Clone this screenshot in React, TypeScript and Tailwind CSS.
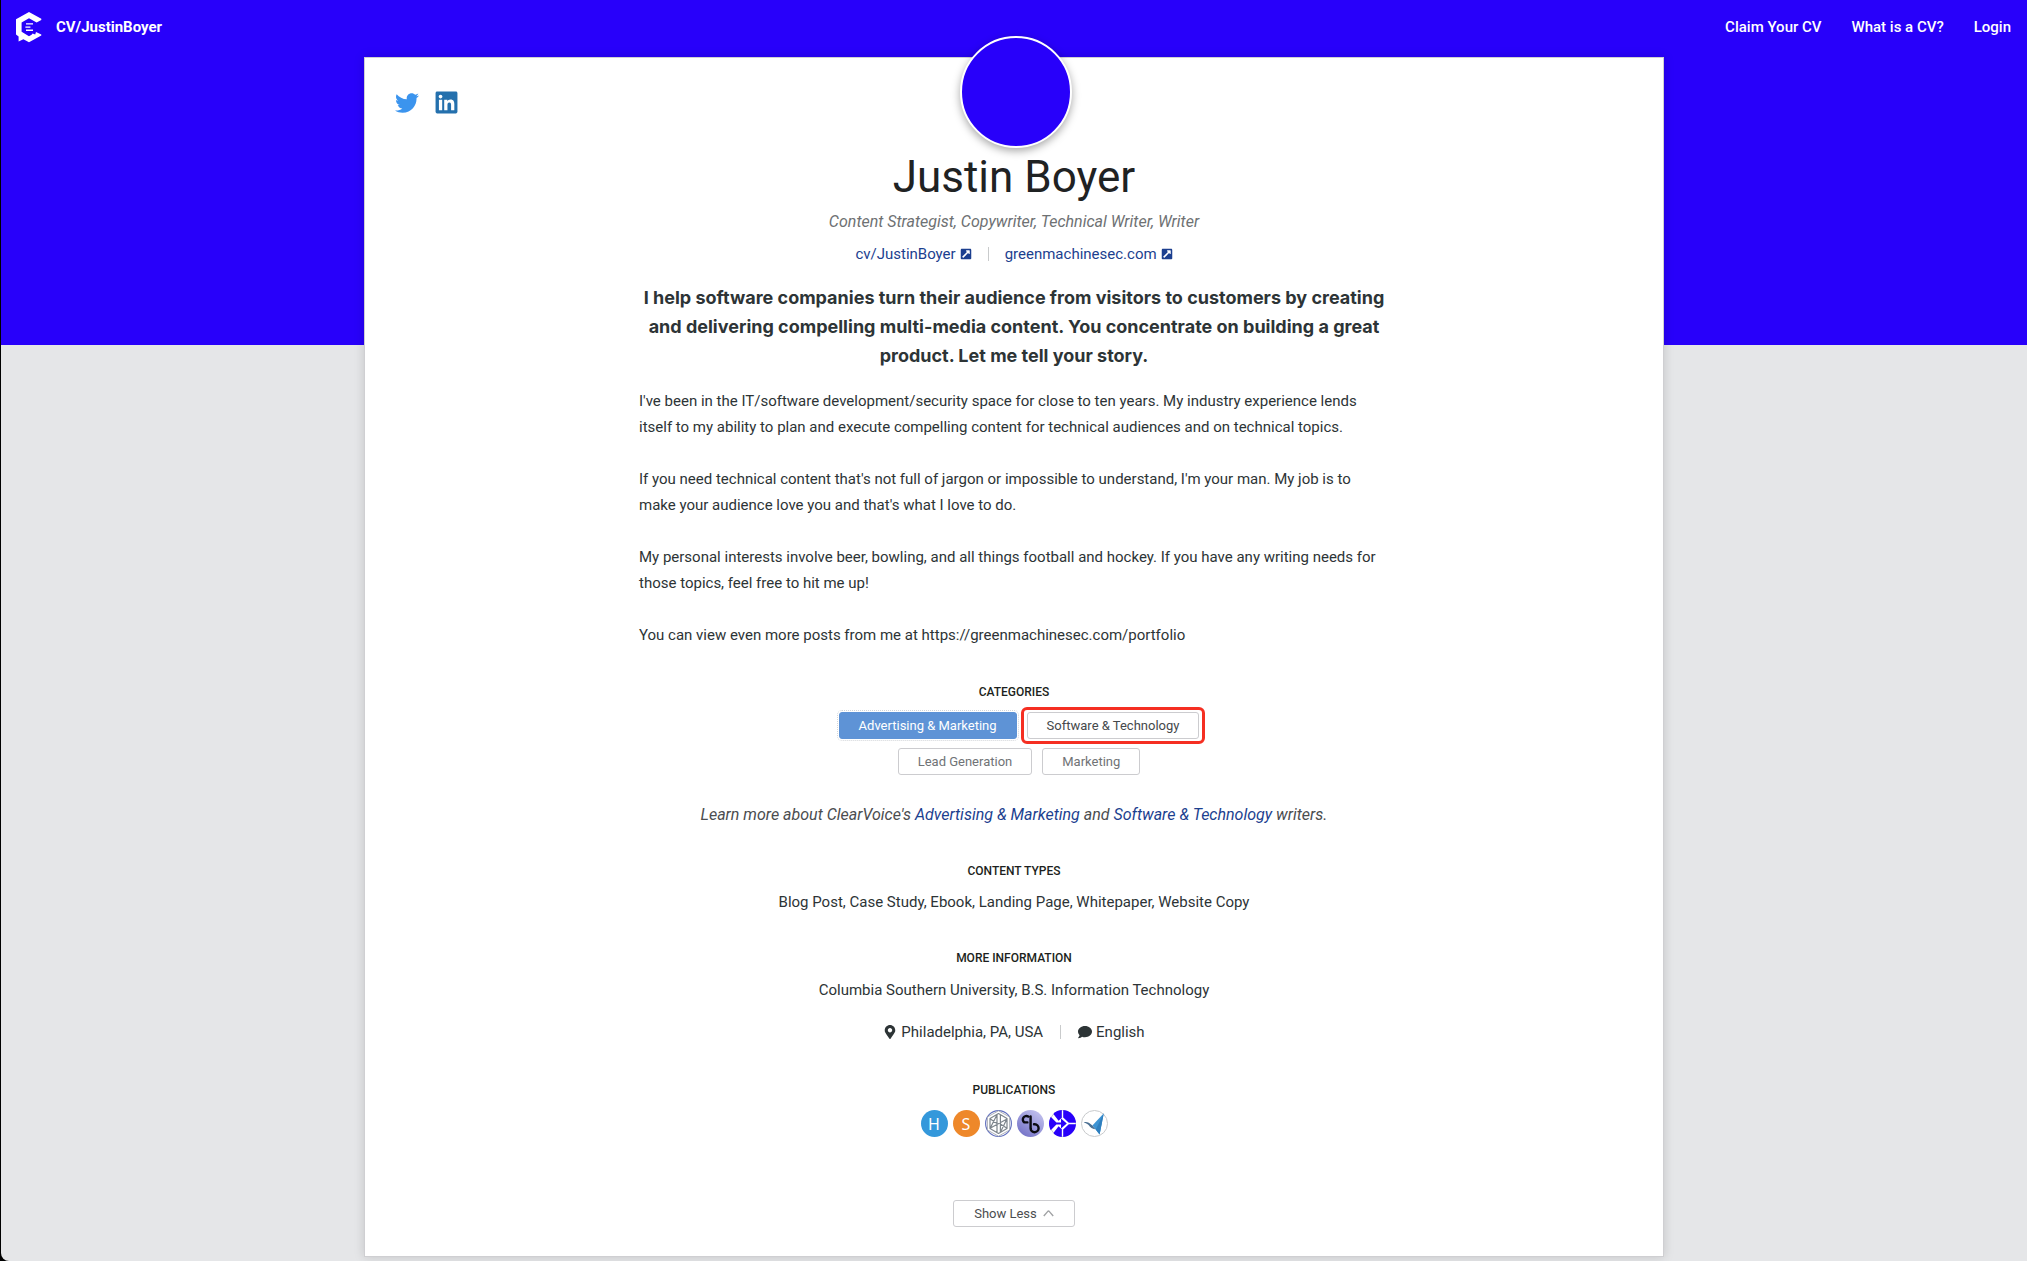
import type { ReactNode } from "react";
import { FaComment, FaExternalLinkSquareAlt, FaLinkedin, FaMapMarkerAlt, FaTwitter } from "react-icons/fa";

const paragraphs = [
  "I've been in the IT/software development/security space for close to ten years. My industry experience lends\nitself to my ability to plan and execute compelling content for technical audiences and on technical topics.",
  "If you need technical content that's not full of jargon or impossible to understand, I'm your man. My job is to\nmake your audience love you and that's what I love to do.",
  "My personal interests involve beer, bowling, and all things football and hockey. If you have any writing needs for\nthose topics, feel free to hit me up!",
  "You can view even more posts from me at https://greenmachinesec.com/portfolio",
];

function Logo() {
  return (
    <svg width="26" height="31" viewBox="0 0 26 31" aria-hidden="true">
      <path
        fill="#fff"
        d="M13 0 L25.3 6.8 V8 L20.6 10.6 L13 6.2 L5.6 10.4 V19.8 L13 24.2 L15.6 22.8 L16.6 21.6 L19.2 22.6 L20 20 L25.3 22.6 V23.6 L13 30.2 L7.4 27.2 L2.6 29.4 V24.4 L0 22.6 V7.2 Z"
      />
      <path fill="none" stroke="#fff" strokeWidth="1.4" d="M10 11.9h7M9.4 15.1h5M10 18.3h7" />
    </svg>
  );
}

function Heading({ children }: { children: ReactNode }) {
  return <h2 className="text-center text-xs leading-4 font-medium text-[#1c1f20] uppercase">{children}</h2>;
}

function Divider() {
  return <span className="h-3.5 w-px bg-[#c9cbcc]" />;
}

function Tag({ children, tone }: { children: ReactNode; tone: string }) {
  return (
    <button type="button" className={`h-[27px] rounded-[3px] border px-[19px] text-[13px] leading-4 ${tone}`}>
      {children}
    </button>
  );
}

function Letter({ children, tone }: { children: ReactNode; tone: string }) {
  return (
    <span className={`grid size-[27px] place-items-center rounded-full font-['Noto_Sans',sans-serif] text-base text-white ${tone}`}>
      {children}
    </span>
  );
}

function HexMesh() {
  return (
    <svg width="27" height="27" viewBox="0 0 27 27" aria-hidden="true">
      <circle cx="13.5" cy="13.5" r="12.9" fill="#fff" stroke="#6573c0" strokeWidth="1.2" />
      <path d="M13.5 0.8 L24.6 7 V20 L13.5 26.2 L2.4 20 V7 Z" fill="#fff" stroke="#9aa0a8" strokeWidth="0.8" />
      <path
        d="M13.5 3.6 L22 8.4 V18.6 L13.5 23.4 L5 18.6 V8.4 Z M12 4.5 V22.6 M15.4 4.8 V22.4 M5 8.8 L12 13.6 M5 18.4 L12 4.8 M5 18.2 L22 9 M15.4 14 L22 18.2 M15.4 22.2 L22 8.8"
        fill="none"
        stroke="#7d858c"
        strokeWidth="1.2"
        strokeLinejoin="round"
      />
    </svg>
  );
}

function LoopMark() {
  return (
    <svg width="27" height="27" viewBox="0 0 27 27" aria-hidden="true">
      <defs>
        <linearGradient id="loop" x1="0.1" y1="1" x2="0.8" y2="0">
          <stop offset="0" stopColor="#6e6cc4" />
          <stop offset="1" stopColor="#c3c2ee" />
        </linearGradient>
      </defs>
      <circle cx="13.5" cy="13.5" r="13.5" fill="url(#loop)" />
      <path
        d="M11.2 6.6 A3.3 3.3 0 1 0 7.4 12.4 H10.4 M13.6 6.4 V18.4 A4 4 0 1 0 17.8 14.2 H17"
        fill="none"
        stroke="#0b0b12"
        strokeWidth="2.4"
        strokeLinecap="round"
        strokeLinejoin="round"
      />
    </svg>
  );
}

function ArrowMark() {
  return (
    <svg width="27" height="27" viewBox="0 0 27 27" aria-hidden="true">
      <defs>
        <clipPath id="disc">
          <circle cx="13.5" cy="13.5" r="13.5" />
        </clipPath>
      </defs>
      <circle cx="13.5" cy="13.5" r="13" fill="#fff" stroke="#c9c9d6" />
      <g fill="#2800fa" clipPath="url(#disc)">
        <path d="M6 0 H12.8 V7.8 L9.6 10.8 L4.4 4 Z" />
        <path d="M14.2 0 H27 V12.8 H19.8 L14.2 7.4 Z" />
        <path d="M0 5 L7.4 12.6 H12 V8.4 L17.8 13.5 L12 18.6 V14.4 H7.4 L0 22 Z" />
        <path d="M6 27 H12.8 V19.2 L9.6 16.2 L4.4 23 Z" />
        <path d="M14.2 27 H27 V14.2 H19.8 L14.2 19.6 Z" />
      </g>
    </svg>
  );
}

function BirdMark() {
  return (
    <svg width="27" height="27" viewBox="0 0 27 27" aria-hidden="true">
      <circle cx="13.5" cy="13.5" r="13" fill="#fff" stroke="#c8cacc" />
      <path d="M22.8 3.2 L11.4 15.4 L18.6 24.4 Z" fill="#3d93d3" />
      <path d="M22.8 3.2 L14.8 19.4 L18.6 24.4 Z" fill="#2f7fbe" />
      <path d="M2.8 12.4 C5.2 11.4 8 12.4 11.4 15.4 L14.4 19.2 C10 19 8.6 15.6 6.6 14.2 C5.6 13.4 4.4 13 2.8 12.4 Z" fill="#4a6f92" />
    </svg>
  );
}

export default function App() {
  return (
    <div className="min-h-screen bg-black pl-px font-[Roboto,sans-serif] text-[15px] text-[#2d3436]">
      <div className="flow-root min-h-screen overflow-hidden rounded-bl-lg bg-[#e5e6e8] pb-1">
        <header className="h-[345px] bg-[#2800fa] text-white">
          <div className="flex h-[54px] items-center justify-between px-4 pl-[15px]">
            <a href="#cv" className="flex items-center gap-3.5 font-bold">
              <Logo />
              CV/JustinBoyer
            </a>
            <nav className="flex gap-[30px] font-medium">
              <a href="#claim">Claim Your CV</a>
              <a href="#about">What is a CV?</a>
              <a href="#login">Login</a>
            </nav>
          </div>
        </header>

        <main className="relative mx-auto -mt-[288px] flex max-w-[1300px] flex-col items-center border border-[#cfcfd2] bg-white pb-[29px] shadow-[0_0_10px_rgba(0,0,0,0.15)]">
          <div className="grid w-full grid-cols-[1fr_auto_1fr] items-start">
            <div className="flex items-center gap-[15px] pt-8 pl-[30px]">
              <a href="#twitter" aria-label="Twitter">
                <FaTwitter size={24} color="#3b94ee" />
              </a>
              <a href="#linkedin" aria-label="LinkedIn">
                <FaLinkedin size={25} color="#2470ad" />
              </a>
            </div>
            <div className="-mt-[22px] ml-1 size-28 rounded-full border-2 border-white bg-[#2800fa] shadow-[0_3px_8px_rgba(0,0,0,0.35)]" />
          </div>

          <h1 className="text-[44px] leading-[58px] text-[#1f2223]">Justin Boyer</h1>
          <p className="mt-1 text-base leading-6 text-[#6e7173] italic">
            Content Strategist, Copywriter, Technical Writer, Writer
          </p>
          <div className="mt-2 flex items-center gap-4 leading-6 text-[#1c3f8f]">
            <a href="#profile" className="flex items-center gap-1">
              cv/JustinBoyer <FaExternalLinkSquareAlt size={12} />
            </a>
            <Divider />
            <a href="#site" className="flex items-center gap-1">
              greenmachinesec.com <FaExternalLinkSquareAlt size={12} />
            </a>
          </div>

          <div className="w-full max-w-[750px]">
            <p className="mt-[17px] text-center font-[Inter,sans-serif] text-lg leading-[29px] font-bold">
              I help software companies turn their audience from visitors to customers by creating and delivering
              compelling multi-media content. You concentrate on building a great product. Let me tell your story.
            </p>
            <div className="mt-[18px] flex flex-col gap-[26px] leading-[26px] whitespace-pre-line">
              {paragraphs.map((text) => (
                <p key={text}>{text}</p>
              ))}
            </div>
          </div>

          <section className="mt-9 flex flex-col items-center">
            <Heading>Categories</Heading>
            <div className="mt-3 ml-2.5 flex max-w-[400px] flex-wrap justify-center gap-x-2.5 gap-y-[9px]">
              <Tag tone="border-[#5e93d6] bg-[#5e93d6] text-white outline-1 outline-offset-1 outline-dotted outline-[#d3d6da]">
                Advertising &amp; Marketing
              </Tag>
              <div className="relative">
                <Tag tone="border-[#cccccf] text-[#45484b]">Software &amp; Technology</Tag>
                <span className="pointer-events-none absolute -inset-x-[6px] -inset-y-[5px] rounded-md border-3 border-[#f52f22]" />
              </div>
              <Tag tone="border-[#cccccf] text-[#707376]">Lead Generation</Tag>
              <Tag tone="border-[#cccccf] text-[#707376]">Marketing</Tag>
            </div>
          </section>

          <p className="mt-7 text-base leading-6 text-[#4b4d4f] italic">
            Learn more about ClearVoice's{" "}
            <a href="#marketing" className="text-[#1c3f8f]">
              Advertising &amp; Marketing
            </a>{" "}
            and{" "}
            <a href="#technology" className="text-[#1c3f8f]">
              Software &amp; Technology
            </a>{" "}
            writers.
          </p>

          <section className="mt-9 text-center">
            <Heading>Content Types</Heading>
            <p className="mt-[11px] leading-6">Blog Post, Case Study, Ebook, Landing Page, Whitepaper, Website Copy</p>
          </section>

          <section className="mt-9 flex flex-col items-center">
            <Heading>More Information</Heading>
            <p className="mt-3 leading-6">Columbia Southern University, B.S. Information Technology</p>
            <div className="mt-[18px] flex items-center gap-[17px] leading-6">
              <span className="flex items-center gap-1">
                <FaMapMarkerAlt size={14} /> Philadelphia, PA, USA
              </span>
              <Divider />
              <span className="flex items-center gap-1">
                <FaComment size={14} /> English
              </span>
            </div>
          </section>

          <section className="mt-[38px] flex flex-col items-center">
            <Heading>Publications</Heading>
            <div className="mt-3 flex gap-[5px]">
              <Letter tone="bg-[#3498db]">H</Letter>
              <Letter tone="bg-[#ee882a]">S</Letter>
              <HexMesh />
              <LoopMark />
              <ArrowMark />
              <BirdMark />
            </div>
          </section>

          <button
            type="button"
            className="mt-[63px] flex h-[27px] items-center gap-1.5 rounded-[3px] border border-[#cccccf] px-5 text-[13px] leading-4 text-[#4b4d4f]"
          >
            Show Less
            <svg width="11" height="7" viewBox="0 0 11 7" aria-hidden="true">
              <path d="M0.8 6 L4.8 1.4 Q5.5 0.8 6.2 1.4 L10.2 6" fill="none" stroke="#a0a2a4" strokeWidth="1.4" />
            </svg>
          </button>
        </main>
      </div>
    </div>
  );
}
